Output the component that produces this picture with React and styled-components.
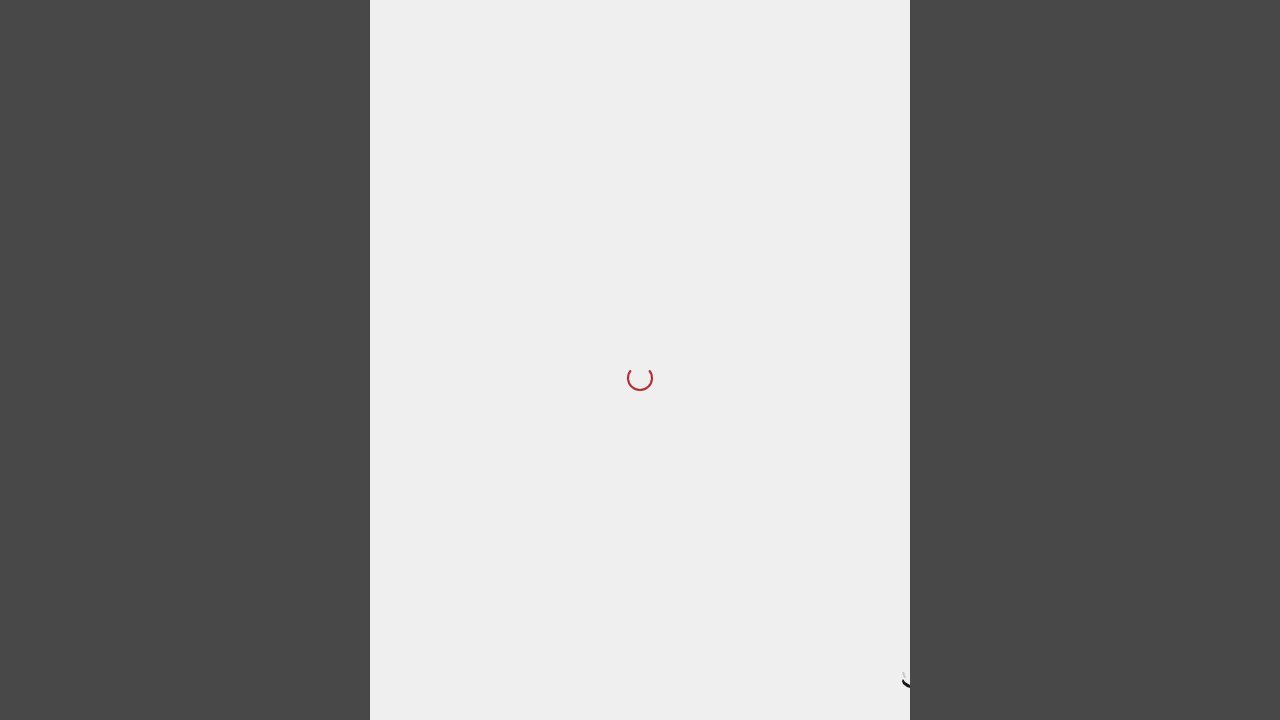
import styled, { createGlobalStyle } from "styled-components";

const GlobalStyle = createGlobalStyle`
  html, body, #root {
    margin: 0;
    height: 100%;
  }
  body {
    background: #484848;
    overflow: hidden;
  }
`;

const ARC = "M5.8 7.3 A12 12 0 1 0 24.2 7.3";

function Spinner() {
  return (
    <SpinnerIcon viewBox="0 0 30 30" aria-label="Loading">
      <path d={ARC} fill="none" stroke="#f8dede" strokeWidth="3.4" />
      <path d={ARC} fill="none" stroke="#a83438" strokeWidth="2.1" />
    </SpinnerIcon>
  );
}

function CursorSmudge() {
  return (
    <Smudge viewBox="0 0 10 20">
      <path d="M3 2 L5 8" stroke="#c8c8c8" strokeWidth="2" fill="none" />
      <path d="M3 9 L5 12 L10 15 L10 18 L7 17 L3 14 L2 11 Z" fill="#161616" />
    </Smudge>
  );
}

export default function App() {
  return (
    <>
      <GlobalStyle />
      <Page>
        <Phone>
          <Spinner />
          <CursorSmudge />
        </Phone>
      </Page>
    </>
  );
}

const Page = styled.div`
  display: flex;
  justify-content: center;
  height: 720px;
  background: #484848;
`;

const Phone = styled.main`
  position: relative;
  display: flex;
  align-items: center;
  justify-content: center;
  width: 540px;
  height: 720px;
  padding-top: 36px;
  box-sizing: border-box;
  background: #efefef;
`;

const SpinnerIcon = styled.svg`
  display: block;
  width: 30px;
  height: 30px;
  overflow: visible;
`;

const Smudge = styled.svg`
  position: absolute;
  right: 0;
  bottom: 30px;
  width: 10px;
  height: 20px;
`;
